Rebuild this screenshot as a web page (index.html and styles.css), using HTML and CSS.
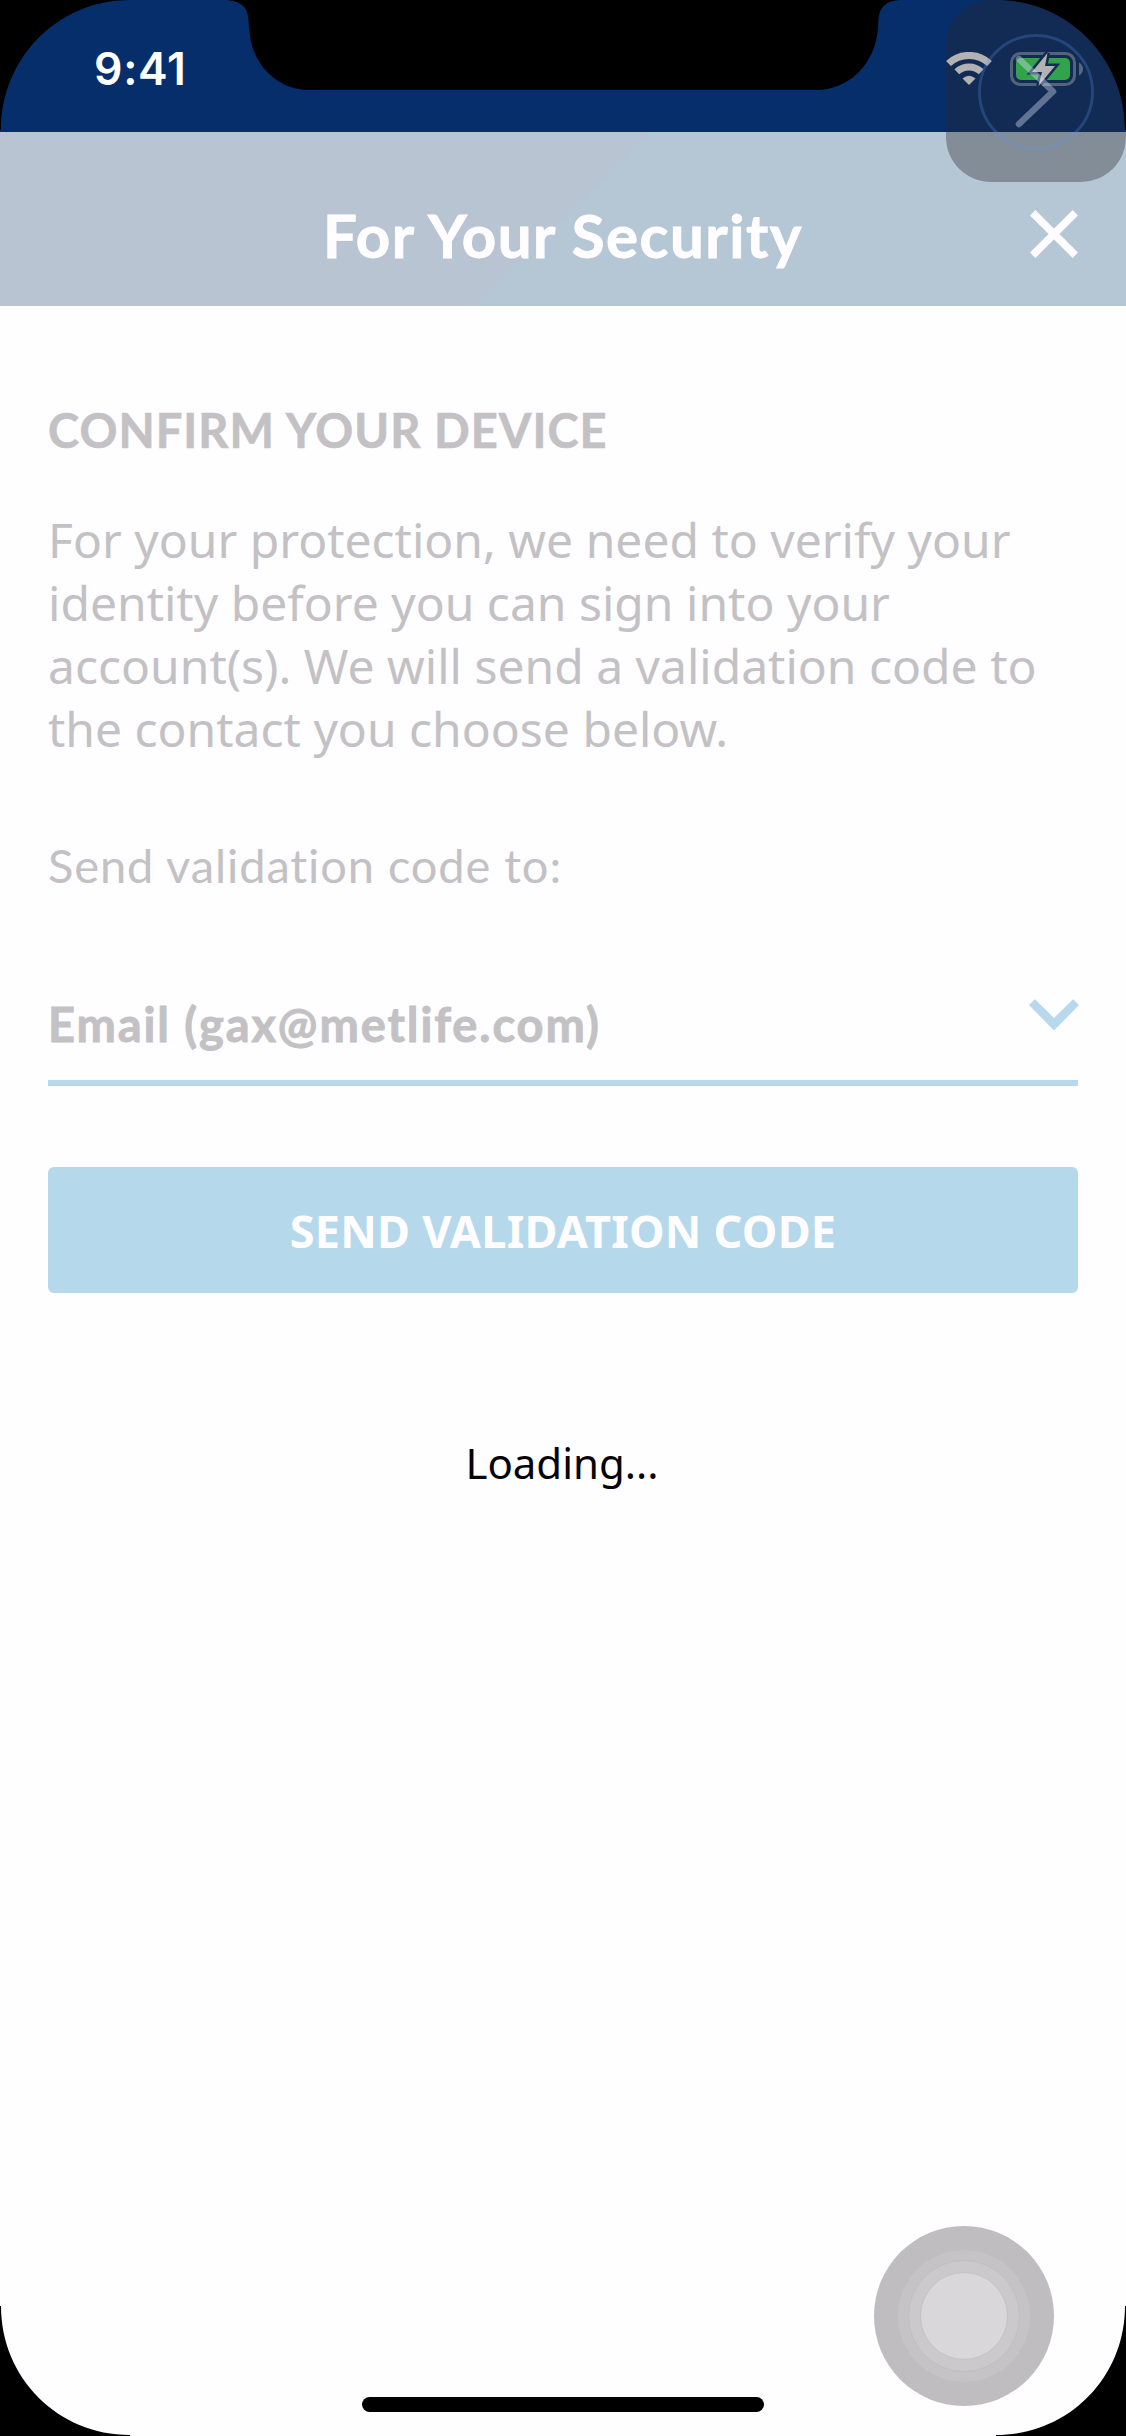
FILE: index.html
```html
<!DOCTYPE html>
<html lang="en">
<head>
<meta charset="utf-8">
<title>For Your Security</title>
<link rel="stylesheet" href="styles.css">
</head>
<body>
<div class="screen">
  <div class="status-bar">
    <span class="time">9:41</span>
    <svg class="status-icons" width="137" height="34" viewBox="0 0 137 34">
      <g fill="none" stroke="#fff" stroke-width="7">
        <path d="M2.500 11.500A30 30 0 0 1 43.500 11.500"/>
        <path d="M10.800 19.800A18 18 0 0 1 35.200 19.800"/>
      </g>
      <path d="M16.500 26.500Q23 21 29.500 26.500L23 33Z" fill="#fff"/>
      <rect x="65.500" y="1.500" width="63" height="31" rx="9" fill="none" stroke="#fff" stroke-opacity=".42" stroke-width="3"/>
      <rect x="70" y="6" width="54" height="22" rx="5" fill="#34ea5e"/>
      <path d="M133 10.500Q137 13 137 17T133 23.500Z" fill="#fff" fill-opacity=".45"/>
      <path d="M101.500 1L86 20H96L92.500 34L109 14H99Z" fill="#fff" stroke="#052e6b" stroke-width="5" paint-order="stroke"/>
    </svg>
  </div>
  <header class="header">
    <h1 class="title">For Your Security</h1>
    <svg class="close" width="48" height="48" viewBox="0 0 48 48"><path d="M2.700 2.700L45.300 45.300M45.300 2.700L2.700 45.300" stroke="#fffdff" stroke-width="7.600"/></svg>
  </header>
  <main class="content">
    <h2 class="heading">CONFIRM YOUR DEVICE</h2>
    <p class="intro">For your protection, we need to verify your<br>identity before you can sign into your<br>account(s). We will send a validation code to<br>the contact you choose below.</p>
    <p class="label">Send validation code to:</p>
    <div class="select">
      <span class="select-value">Email (gax@metlife.com)</span>
      <svg class="chevron" width="50" height="32" viewBox="0 0 50 32"><path d="M0 6L6 .3L25 19L44 .3L50 6L25 31.500Z" fill="#b7d9eb"/></svg>
    </div>
    <button class="send" type="button"><span class="send-text">SEND VALIDATION CODE</span></button>
    <p class="loading">Loading...</p>
  </main>
  <div class="recorder">
    <svg width="180" height="182" viewBox="0 0 180 182" fill="none">
      <circle cx="90" cy="92" r="56.500" stroke="#5a96f0" stroke-opacity=".25" stroke-width="3"/>
      <path d="M73 59L107 91.500L73 124" stroke="#e1e8fa" stroke-opacity=".38" stroke-width="6.500" stroke-linecap="round" stroke-linejoin="round"/>
    </svg>
  </div>
  <div class="assistive"><div class="ring-outer"><div class="ring-inner"><div class="knob"></div></div></div></div>
  <div class="home-indicator"></div>
  <svg class="frame" width="1126" height="2436" viewBox="0 0 1126 2436">
    <path d="M0 0H130C58 0 1 58 1 130H0Z"/>
    <path d="M1126 0H996C1068 0 1125 58 1125 130H1126Z"/>
    <path d="M0 2306H1C1 2378 58 2435 130 2435V2436H0Z"/>
    <path d="M1126 2306H1125C1125 2378 1068 2435 996 2435V2436H1126Z"/>
    <path d="M226 0C242 1 248 8 248.500 20C249 28 249.500 30 250 36C254 66 278 90 310 90H816C848 90 872 66 877 36C878 30 878 28 878.500 20C879 8 885 1 900 0Z"/>
  </svg>
</div>
</body>
</html>
```
FILE: styles.css
```css
* { box-sizing: border-box; margin: 0; padding: 0; }

body { background: #000; }

.screen {
  position: relative;
  width: 1126px;
  height: 2436px;
  overflow: hidden;
  background: #fefdff;
  color: #c3c1c4;
  font-family: Lato, "Liberation Sans", sans-serif;
  font-variant-ligatures: none;
  white-space: nowrap;
}

svg { display: block; flex: none; }

.status-bar {
  display: flex;
  align-items: center;
  justify-content: space-between;
  height: 132px;
  padding: 6px 43px 0 94px;
  background: #052e6b;
}

.time {
  color: #fff;
  font: 600 44.5px/60px Inter, sans-serif;
  letter-spacing: .7px;
}

.header {
  display: grid;
  grid-template-columns: 48px 1fr 48px;
  align-items: center;
  height: 174px;
  padding: 30px 48px 0;
  background: linear-gradient(135deg, #b8c4d1 50%, #b5c7d5 50%);
}

.title {
  grid-column: 2;
  padding-top: 2px;
  text-align: center;
  color: #fffdff;
  font-size: 60px;
  font-weight: 700;
  line-height: 70px;
  letter-spacing: 1.5px;
  -webkit-text-stroke: .9px currentColor;
}

.content {
  display: flex;
  flex-direction: column;
  padding: 94px 48px 0;
}

.heading {
  font-size: 47px;
  font-weight: 700;
  line-height: 60px;
  letter-spacing: 1.05px;
  -webkit-text-stroke: .6px currentColor;
}

.intro {
  margin-top: 48px;
  font: 400 48px/63px "Noto Sans", sans-serif;
}

.label {
  margin-top: 75px;
  font-size: 47px;
  line-height: 60px;
  letter-spacing: .9px;
}

.select {
  display: flex;
  align-items: center;
  justify-content: space-between;
  height: 108px;
  margin-top: 83px;
  padding-bottom: 12px;
  border-bottom: 6px solid #b7d9eb;
}

.select-value {
  padding-top: 2px;
  font-size: 47px;
  font-weight: 700;
  line-height: 60px;
  letter-spacing: 1.9px;
  -webkit-text-stroke: .9px currentColor;
}

.chevron {
  margin-right: -1px;
  margin-bottom: 17px;
}

.send {
  height: 126px;
  margin-top: 81px;
  padding-top: 2px;
  border: 0;
  border-radius: 6px;
  background: #b5d9ea;
  color: #fffdff;
  font: 700 45px/60px "Noto Sans", sans-serif;
  letter-spacing: .25px;
}

.loading {
  margin-top: 142px;
  padding-right: 2px;
  text-align: center;
  color: #050306;
  font: 400 42px/56px "Noto Sans", sans-serif;
}

.recorder {
  position: absolute;
  top: 0;
  right: 0;
  border-radius: 45px;
  background: rgba(41, 38, 43, .36);
}

.assistive {
  position: absolute;
  left: 874px;
  top: 2226px;
  display: grid;
  place-items: center;
  width: 180px;
  height: 180px;
  border-radius: 50%;
  background: #bfbdc0;
}

.ring-outer, .ring-inner {
  display: grid;
  place-items: center;
  border-radius: 50%;
}

.ring-outer {
  width: 132px;
  height: 132px;
  background: #c5c3c6;
}

.ring-inner {
  width: 112px;
  height: 112px;
  border: 1px solid #c1bfc2;
  background: #cbc9cc;
}

.knob {
  width: 88px;
  height: 88px;
  border: 1px solid #c4c2c5;
  border-radius: 50%;
  background: #d9d7da;
}

.home-indicator {
  position: absolute;
  left: 362px;
  bottom: 24px;
  width: 402px;
  height: 15px;
  border-radius: 8px;
  background: #000;
}

.frame {
  position: absolute;
  inset: 0;
  pointer-events: none;
}
```
